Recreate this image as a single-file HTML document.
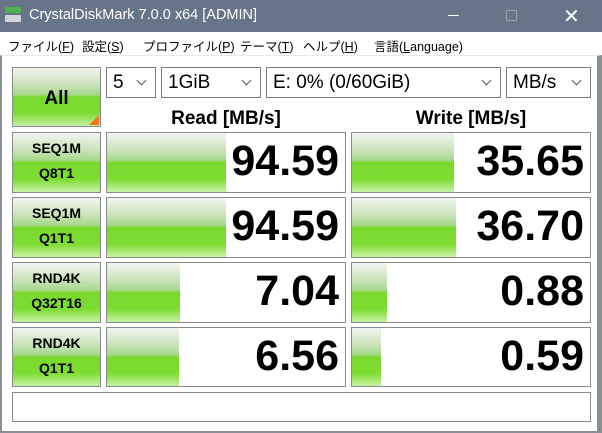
<!DOCTYPE html>
<html><head><meta charset="utf-8"><style>
*{margin:0;padding:0;box-sizing:border-box}
body{width:602px;height:433px;overflow:hidden;background:#fff;font-family:"Liberation Sans","Noto Sans CJK JP",sans-serif;position:relative}
.tb{position:absolute;left:0;top:0;width:602px;height:32px;background:#667587;color:#fff;font-size:14.5px}
.menu{position:absolute;left:0;top:32px;width:602px;height:23px;font-size:12.5px;background:#fff}
.menu span{position:absolute;top:4px;white-space:nowrap}
.frame{position:absolute;left:0;top:55px;width:602px;height:378px;border-left:2px solid #8a8f96;border-right:5px solid #8a8f96;border-bottom:2px solid #8a8f96;border-top:1px solid #e8e8e8}
.a{position:absolute}
.box{position:absolute;border:1px solid #8a8a8a;background:#fff}
.g{background:linear-gradient(#f2f5f0 0%,#c8e2b8 30%,#a6d88c 46%,#7ad92e 50%,#7ddc30 78%,#c8f2a6 100%)}
.lbl{font-weight:bold;font-size:14px;text-align:center;line-height:25px;padding-top:3px}
.num{position:absolute;right:6px;top:4px;font-weight:bold;font-size:43px;color:#000}
.dd{position:absolute;height:31px;border:1px solid #7a7a7a;background:#fff;font-size:19px;padding:4px 0 0 6px}
.dd:after{content:"";position:absolute;right:10px;top:9px;width:6px;height:6px;border-right:1px solid #555;border-bottom:1px solid #555;transform:rotate(45deg)}
.hd{position:absolute;top:108px;font-weight:bold;font-size:19px;text-align:center}
</style></head><body>
<div class="tb">
<div class="a" style="left:5px;top:7px;width:16px;height:16px">
<div style="height:6px;background:#4caf50;border-radius:1px"></div>
<div style="height:2px"></div>
<div style="height:7px;background:#cfd4d8;border-radius:1px"></div></div>
<span class="a" style="left:29px;top:7px">CrystalDiskMark 7.0.0 x64 [ADMIN]</span>
<div class="a" style="left:448px;top:15px;width:11px;height:1px;background:#fff"></div>
<div class="a" style="left:506px;top:10px;width:11px;height:11px;border:1px solid #98a2ad"></div>
<span class="a" style="left:563px;top:4px;font-size:20px">✕</span>
</div>
<div class="menu">
<span style="left:8px">ファイル(<u>F</u>)</span>
<span style="left:82px">設定(<u>S</u>)</span>
<span style="left:143px">プロファイル(<u>P</u>)</span>
<span style="left:240px">テーマ(<u>T</u>)</span>
<span style="left:303px">ヘルプ(<u>H</u>)</span>
<span style="left:374px">言語(<u>L</u>anguage)</span>
</div>
<div class="frame"></div>
<div class="box g" style="left:12px;top:67px;width:89px;height:60px;font-weight:bold;font-size:19px;text-align:center;line-height:62px">All
<div class="a" style="right:1px;bottom:1px;width:0;height:0;border-left:10px solid transparent;border-bottom:10px solid #f07818"></div></div>
<div class="dd" style="left:106px;top:67px;width:50px">5</div>
<div class="dd" style="left:161px;top:67px;width:100px">1GiB</div>
<div class="dd" style="left:266px;top:67px;width:235px">E: 0% (0/60GiB)</div>
<div class="dd" style="left:506px;top:67px;width:85px">MB/s</div>
<div class="hd" style="left:106px;width:240px">Read [MB/s]</div>
<div class="hd" style="left:351px;width:240px">Write [MB/s]</div>

<div class="box g lbl" style="left:12px;top:132px;width:89px;height:61px">SEQ1M<br>Q8T1</div>
<div class="box" style="left:106px;top:132px;width:240px;height:61px"><div class="g" style="width:119px;height:100%"></div><div class="num">94.59</div></div>
<div class="box" style="left:351px;top:132px;width:240px;height:61px"><div class="g" style="width:102px;height:100%"></div><div class="num">35.65</div></div>

<div class="box g lbl" style="left:12px;top:197px;width:89px;height:61px">SEQ1M<br>Q1T1</div>
<div class="box" style="left:106px;top:197px;width:240px;height:61px"><div class="g" style="width:119px;height:100%"></div><div class="num">94.59</div></div>
<div class="box" style="left:351px;top:197px;width:240px;height:61px"><div class="g" style="width:104px;height:100%"></div><div class="num">36.70</div></div>

<div class="box g lbl" style="left:12px;top:262px;width:89px;height:61px">RND4K<br>Q32T16</div>
<div class="box" style="left:106px;top:262px;width:240px;height:61px"><div class="g" style="width:73px;height:100%"></div><div class="num">7.04</div></div>
<div class="box" style="left:351px;top:262px;width:240px;height:61px"><div class="g" style="width:35px;height:100%"></div><div class="num">0.88</div></div>

<div class="box g lbl" style="left:12px;top:327px;width:89px;height:60px">RND4K<br>Q1T1</div>
<div class="box" style="left:106px;top:327px;width:240px;height:60px"><div class="g" style="width:72px;height:100%"></div><div class="num">6.56</div></div>
<div class="box" style="left:351px;top:327px;width:240px;height:60px"><div class="g" style="width:29px;height:100%"></div><div class="num">0.59</div></div>

<div class="box" style="left:12px;top:392px;width:579px;height:30px"></div>
</body></html>
